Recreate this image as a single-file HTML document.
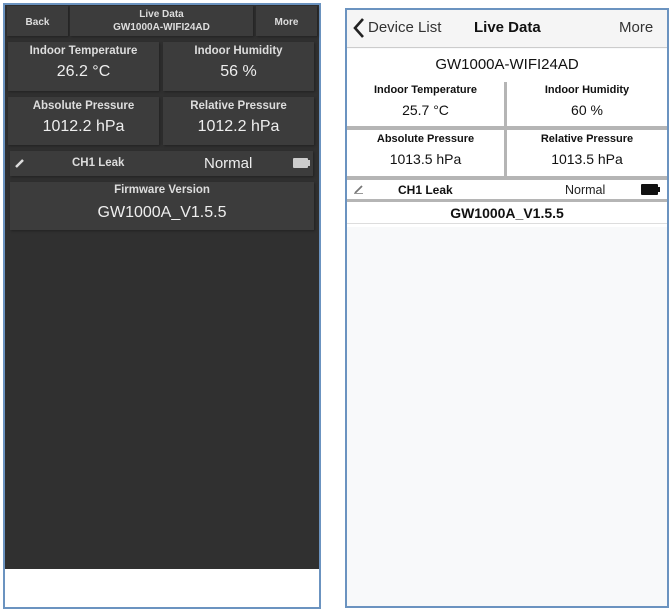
<!DOCTYPE html>
<html><head><style>
*{margin:0;padding:0;box-sizing:border-box}
body{width:671px;height:611px;background:#fff;position:relative;font-family:"Liberation Sans",sans-serif;overflow:hidden}
.a{position:absolute}
#L{left:3px;top:3px;width:318px;height:606px;border:2px solid #6b93c0;background:#fff}
#Ld{left:5px;top:5px;width:314px;height:564px;background:#303030}
.c{position:absolute;background:#3c3c3c;color:#e8e8e8;text-align:center;box-shadow:1px 1px 2px #222}
.t{font-size:11.5px;font-weight:bold;color:#ddd}
.v{font-size:16px;color:#eee}
#R{left:345px;top:8px;width:324px;height:600px;border:2px solid #6b93c0;background:#f8f9fa}
.w{position:absolute;background:#fff;text-align:center;color:#111}
.g{position:absolute;background:#b5b5b5}
</style></head><body>
<div id="L" class="a"></div>
<div id="Ld" class="a"></div>
<div class="c" style="left:7px;top:6px;width:61px;height:30px;line-height:30px"><span class="t" style="font-size:10px">Back</span></div>
<div class="c" style="left:70px;top:6px;width:183px;height:30px"><div class="t" style="font-size:10px;margin-top:3px">Live Data</div><div class="t" style="font-size:10px;margin-top:2px">GW1000A-WIFI24AD</div></div>
<div class="c" style="left:256px;top:6px;width:61px;height:30px;line-height:30px"><span class="t" style="font-size:10px">More</span></div>
<div class="c" style="left:8px;top:42px;width:151px;height:49px"><div class="t" style="margin-top:3px">Indoor Temperature</div><div class="v" style="margin-top:6px">26.2 °C</div></div>
<div class="c" style="left:163px;top:42px;width:151px;height:49px"><div class="t" style="margin-top:3px">Indoor Humidity</div><div class="v" style="margin-top:6px">56 %</div></div>
<div class="c" style="left:8px;top:97px;width:151px;height:48px"><div class="t" style="margin-top:3px">Absolute Pressure</div><div class="v" style="margin-top:6px">1012.2 hPa</div></div>
<div class="c" style="left:163px;top:97px;width:151px;height:48px"><div class="t" style="margin-top:3px">Relative Pressure</div><div class="v" style="margin-top:6px">1012.2 hPa</div></div>
<div class="c" style="left:10px;top:151px;width:303px;height:25px">
<svg class="a" style="left:5px;top:7px" width="10" height="10"><path d="M1 9 L8 2" stroke="#ddd" stroke-width="2.5"/></svg>
<span class="a t" style="left:62px;top:6px">CH1 Leak</span>
<span class="a v" style="left:194px;top:4px;font-size:15px">Normal</span>
<span class="a" style="left:283px;top:7px;width:15px;height:10px;background:#ccc;border-radius:1px"></span>
<span class="a" style="left:298px;top:9px;width:2px;height:6px;background:#ccc"></span></div>
<div class="c" style="left:10px;top:182px;width:304px;height:48px"><div class="t" style="margin-top:2px">Firmware Version</div><div class="v" style="margin-top:8px">GW1000A_V1.5.5</div></div>

<div id="R" class="a"></div>
<div class="a" style="left:347px;top:10px;width:320px;height:38px;background:#f5f5f5;border-bottom:1px solid #ccc"></div>
<svg class="a" style="left:352px;top:17px" width="14" height="22"><path d="M11 2 L3 11 L11 20" stroke="#222" stroke-width="2.6" fill="none"/></svg>
<div class="a" style="left:368px;top:19px;font-size:15px;color:#333">Device List</div>
<div class="a" style="left:474px;top:19px;font-size:15px;font-weight:bold;color:#111">Live Data</div>
<div class="a" style="left:619px;top:19px;font-size:15px;color:#333">More</div>
<div class="w" style="left:347px;top:49px;width:320px;height:178px"></div>
<div class="a" style="left:347px;top:56px;width:320px;text-align:center;font-size:15px;color:#111">GW1000A-WIFI24AD</div>
<div class="g" style="left:504px;top:82px;width:3px;height:96px"></div>
<div class="g" style="left:347px;top:126px;width:320px;height:4px"></div>
<div class="g" style="left:347px;top:176px;width:320px;height:4px"></div>
<div class="g" style="left:347px;top:199px;width:320px;height:3px"></div>
<div class="a" style="left:347px;top:223px;width:320px;height:1px;background:#ddd"></div>
<div class="w" style="left:347px;top:84px;width:157px;background:none"><div style="font-size:11px;font-weight:bold">Indoor Temperature</div><div style="font-size:14px;margin-top:6px">25.7 °C</div></div>
<div class="w" style="left:507px;top:84px;width:160px;background:none"><div style="font-size:11px;font-weight:bold">Indoor Humidity</div><div style="font-size:14px;margin-top:6px">60 %</div></div>
<div class="w" style="left:347px;top:133px;width:157px;background:none"><div style="font-size:11px;font-weight:bold">Absolute Pressure</div><div style="font-size:14px;margin-top:6px">1013.5 hPa</div></div>
<div class="w" style="left:507px;top:133px;width:160px;background:none"><div style="font-size:11px;font-weight:bold">Relative Pressure</div><div style="font-size:14px;margin-top:6px">1013.5 hPa</div></div>
<svg class="a" style="left:354px;top:184px" width="10" height="10"><path d="M1 9 L8 2" stroke="#777" stroke-width="1.8"/><path d="M0 9.5 H9" stroke="#999" stroke-width="1"/></svg>
<div class="a" style="left:398px;top:183px;font-size:12px;font-weight:bold;color:#111">CH1 Leak</div>
<div class="a" style="left:565px;top:183px;font-size:12.5px;color:#222">Normal</div>
<div class="a" style="left:641px;top:184px;width:17px;height:11px;border:1.5px solid #111;background:#111;border-radius:1px"></div>
<div class="a" style="left:658px;top:187px;width:2px;height:5px;background:#111"></div>
<div class="a" style="left:347px;top:205px;width:320px;text-align:center;font-size:14px;font-weight:bold;color:#111">GW1000A_V1.5.5</div>
</body></html>
